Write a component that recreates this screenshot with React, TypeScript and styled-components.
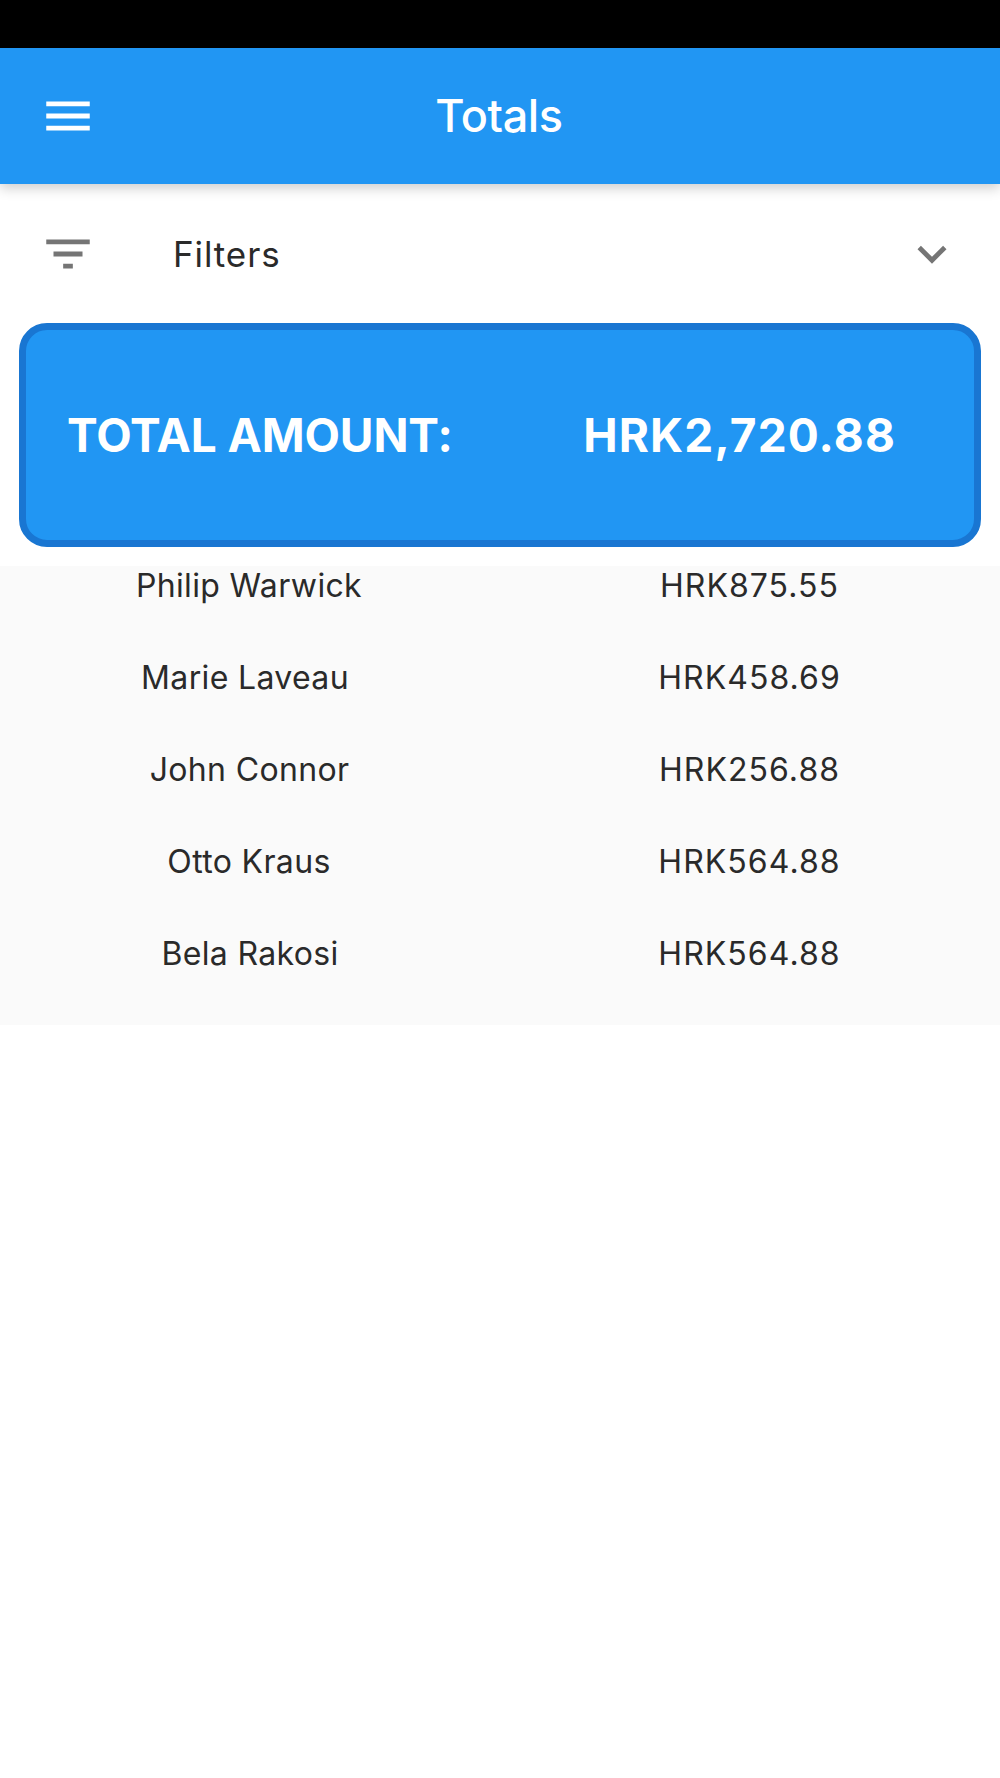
import { createGlobalStyle } from "styled-components";
import styled from "styled-components";

const GlobalStyle = createGlobalStyle`
  html, body {
    margin: 0;
    padding: 0;
    background: #fff;
    font-family: Inter, "Noto Sans", sans-serif;
  }
`;

const Page = styled.div`
  width: 1000px;
  height: 1778px;
  overflow: hidden;
  background: #fff;
`;

const StatusBar = styled.div`
  height: 48px;
  background: #000;
`;

const AppBar = styled.header`
  height: 136px;
  display: grid;
  grid-template-columns: 1fr auto 1fr;
  align-items: center;
  padding: 0 39px;
  background: #2196f3;
  box-shadow: 0 4px 12px rgba(0, 0, 0, 0.2);
`;

const Title = styled.h1`
  margin: 0 2px 2px 0;
  font-size: 45px;
  font-weight: 500;
  letter-spacing: -0.4px;
  color: #fff;
`;

const Icon = styled.svg`
  display: block;
  width: 58px;
  height: 58px;
  fill: ${(p) => p.color || "#757575"};
`;

const FilterRow = styled.div`
  height: 139px;
  display: flex;
  align-items: center;
  padding: 0 39px;
`;

const FilterLabel = styled.span`
  flex: 1;
  margin-left: 76px;
  font-size: 35px;
  font-weight: 400;
  letter-spacing: 0.9px;
  color: #2a2a2a;
`;

const TotalCard = styled.section`
  height: 224px;
  box-sizing: border-box;
  margin: 0 19px 19px;
  padding: 0 78px 0 41px;
  display: flex;
  align-items: center;
  justify-content: space-between;
  background: #2196f3;
  border: 7px solid #1976d2;
  border-radius: 28px;
  color: #fff;
  font-size: 46px;
  font-weight: 700;
`;

const TotalLabel = styled.span`
  letter-spacing: -0.1px;
`;

const TotalValue = styled.span`
  letter-spacing: 1.15px;
`;

const List = styled.div`
  height: 459px;
  display: flex;
  flex-direction: column;
  gap: 54px;
  background: #fafafa;
`;

const Row = styled.div`
  height: 38px;
  display: grid;
  grid-template-columns: 1fr 1fr;
  align-items: center;
  text-align: center;
  font-size: 32px;
  color: #2a2a2a;
`;

const Name = styled.span<{ $nudge: number }>`
  padding-right: ${(p) => p.$nudge}px;
  letter-spacing: 0.35px;
`;

const Amount = styled.span`
  padding-right: 1px;
  letter-spacing: 1.05px;
`;

const people = [
  { name: "Philip Warwick", amount: "HRK875.55", nudge: 2 },
  { name: "Marie Laveau", amount: "HRK458.69", nudge: 10 },
  { name: "John Connor", amount: "HRK256.88", nudge: 1 },
  { name: "Otto Kraus", amount: "HRK564.88", nudge: 2 },
  { name: "Bela Rakosi", amount: "HRK564.88", nudge: 0 },
];

const App = () => {
  return (
    <Page>
      <GlobalStyle />
      <StatusBar />
      <AppBar>
        <Icon viewBox="0 0 24 24" color="#fff">
          <path d="M3 18h18v-2H3v2zm0-5h18v-2H3v2zm0-7v2h18V6H3z" />
        </Icon>
        <Title>Totals</Title>
      </AppBar>
      <FilterRow>
        <Icon viewBox="0 0 24 24">
          <path d="M10 18h4v-2h-4v2zM3 6v2h18V6H3zm3 7h12v-2H6v2z" />
        </Icon>
        <FilterLabel>Filters</FilterLabel>
        <Icon viewBox="0 0 24 24">
          <path d="M16.59 8.59L12 13.17 7.41 8.59 6 10l6 6 6-6z" />
        </Icon>
      </FilterRow>
      <TotalCard>
        <TotalLabel>TOTAL AMOUNT:</TotalLabel>
        <TotalValue>HRK2,720.88</TotalValue>
      </TotalCard>
      <List>
        {people.map((person) => (
          <Row key={person.name}>
            <Name $nudge={person.nudge}>{person.name}</Name>
            <Amount>{person.amount}</Amount>
          </Row>
        ))}
      </List>
    </Page>
  );
};

export default App;
